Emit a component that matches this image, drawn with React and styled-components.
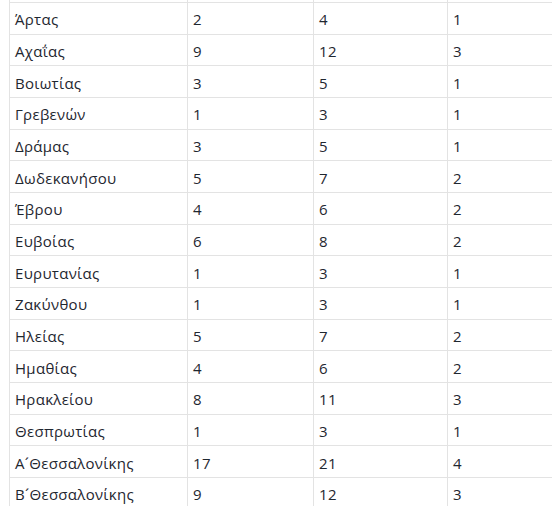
import React from "react";
import styled, { createGlobalStyle } from "styled-components";

const Global = createGlobalStyle`
  html, body { margin: 0; padding: 0; background: #fff; overflow: hidden; }
  body { font-family: "Open Sans", "Noto Sans", sans-serif; }
`;

const Viewport = styled.div`
  width: 552px;
  height: 506px;
  overflow: hidden;
  padding-left: 9px;
  box-sizing: border-box;
`;

const Table = styled.table`
  border-collapse: separate;
  border-spacing: 0;
  table-layout: fixed;
  width: 572px;
  border-left: 1px solid #e3e3e3;
`;

const Col = styled.col`
  width: ${(p) => p.$w}px;
`;

const Cell = styled.td`
  box-sizing: border-box;
  height: ${(p) => (p.$spacer ? "3px" : "31.67px")};
  padding: ${(p) => (p.$spacer ? "0" : "2px 0 0 5px")};
  border-right: 1px solid #e3e3e3;
  border-bottom: 1px solid #e3e3e3;
  font-size: 15px;
  letter-spacing: 0.3px;
  color: #1f2730;
  white-space: nowrap;
  vertical-align: middle;
  line-height: 18px;
`;

const rows = [
  ["Άρτας", 2, 4, 1],
  ["Αχαΐας", 9, 12, 3],
  ["Βοιωτίας", 3, 5, 1],
  ["Γρεβενών", 1, 3, 1],
  ["Δράμας", 3, 5, 1],
  ["Δωδεκανήσου", 5, 7, 2],
  ["Έβρου", 4, 6, 2],
  ["Ευβοίας", 6, 8, 2],
  ["Ευρυτανίας", 1, 3, 1],
  ["Ζακύνθου", 1, 3, 1],
  ["Ηλείας", 5, 7, 2],
  ["Ημαθίας", 4, 6, 2],
  ["Ηρακλείου", 8, 11, 3],
  ["Θεσπρωτίας", 1, 3, 1],
  ["Α\u00B4Θεσσαλονίκης", 17, 21, 4],
  ["Β\u00B4Θεσσαλονίκης", 9, 12, 3],
];

export default function App() {
  return (
    <Viewport>
      <Global />
      <Table>
        <colgroup>
          <Col $w={178} />
          <Col $w={126} />
          <Col $w={134} />
          <Col $w={134} />
        </colgroup>
        <tbody>
          <tr>
            <Cell $spacer />
            <Cell $spacer />
            <Cell $spacer />
            <Cell $spacer />
          </tr>
          {rows.map((r) => (
            <tr key={r[0]}>
              {r.map((v, i) => (
                <Cell key={i}>{v}</Cell>
              ))}
            </tr>
          ))}
        </tbody>
      </Table>
    </Viewport>
  );
}
